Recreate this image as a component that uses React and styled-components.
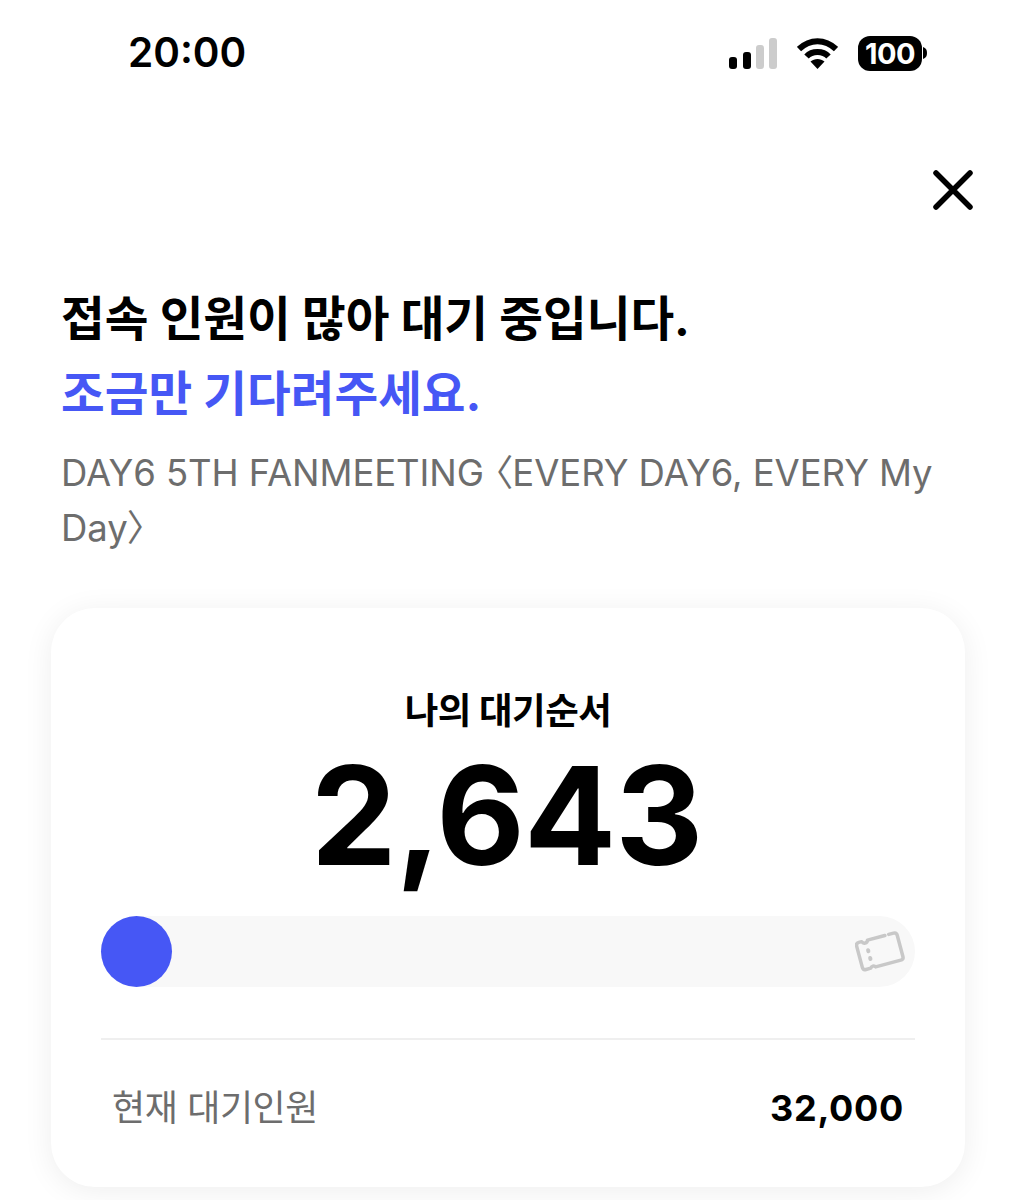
import React from "react";
import styled, { createGlobalStyle } from "styled-components";

const Global = createGlobalStyle`
  html, body { margin: 0; padding: 0; background: #fff; }
  body { width: 1016px; height: 1200px; overflow: hidden; font-family: "Inter", "Noto Sans CJK KR", sans-serif; }
`;
const KR = `"Inter", "Noto Sans CJK KR", sans-serif`;

const Page = styled.div`
  width: 1016px;
  height: 1200px;
  overflow: hidden;
  display: flex;
  flex-direction: column;
  color: #000;
`;
const StatusBar = styled.div`
  height: 106px;
  display: flex;
  justify-content: space-between;
  align-items: center;
  padding: 0 89px 0 128px;
  box-sizing: border-box;
`;
const Clock = styled.div`
  font: 600 40.5px/1 ${KR};
`;
const StatusIcons = styled.div`
  display: flex;
  align-items: center;
  gap: 20px;
`;
const Battery = styled.div`
  display: flex;
  align-items: center;
  gap: 1px;
`;
const BatteryBody = styled.div`
  width: 64px;
  height: 35px;
  border-radius: 12px;
  background: #000;
  color: #fff;
  font: 700 29px/35px "Inter", sans-serif;
  text-align: center;
  letter-spacing: -0.5px;
`;
const CloseRow = styled.div`
  display: flex;
  justify-content: flex-end;
  padding: 64px 43px 0 0;
  height: 46px;
`;
const Heading = styled.section`
  padding: 65px 60px 0 61px;
`;
const Title = styled.h1`
  margin: 0;
  font: 700 47.5px/75px ${KR};
  color: ${(p) => p.$color || "#000"};
  white-space: nowrap;
`;
const Subtitle = styled.p`
  margin: 15px 0 0;
  font: 400 36.5px/55px ${KR};
  letter-spacing: -0.07px;
  color: #6d6d6d;
`;
const Bracket = styled.span`
  font-feature-settings: "palt";
`;
const Card = styled.section`
  margin: 52px 51px 0;
  width: 914px;
  height: 579px;
  flex: none;
  box-sizing: border-box;
  background: #fff;
  border-radius: 44px;
  box-shadow: 0 4px 30px rgba(0, 0, 0, 0.07);
  padding: 78px 50px 0;
  display: flex;
  flex-direction: column;
`;
const QueueLabel = styled.div`
  font: 700 36.5px/50px ${KR};
  letter-spacing: -0.5px;
  text-align: center;
`;
const QueueNumber = styled.div`
  font: 700 136.5px/136px "Inter", sans-serif;
  text-align: center;
  letter-spacing: -1px;
  margin-top: 12px;
  padding-right: 3px;
`;
const Track = styled.div`
  margin-top: 32px;
  height: 71px;
  flex: none;
  border-radius: 36px;
  background: #f8f8f8;
  display: flex;
  align-items: center;
  justify-content: space-between;
  padding-right: 8px;
`;
const Dot = styled.div`
  width: 71px;
  height: 71px;
  border-radius: 50%;
  background: #4657f5;
`;
const Divider = styled.div`
  margin-top: 51px;
  height: 2px;
  flex: none;
  background: #efefef;
`;
const InfoRow = styled.div`
  display: flex;
  justify-content: space-between;
  align-items: center;
  padding: 0 11px;
  margin-top: 41px;
`;
const InfoLabel = styled.div`
  font: 400 36px/54px ${KR};
  color: #6d6d6d;
  letter-spacing: -0.4px;
`;
const InfoValue = styled.div`
  font: 700 36px/54px "Inter", sans-serif;
  letter-spacing: 0.7px;
`;

const Signal = () => (
  <svg width="48" height="31" viewBox="0 0 48 31">
    <rect x="0" y="19" width="8" height="12" rx="3" fill="#000" />
    <rect x="14" y="14" width="8" height="17" rx="3" fill="#000" />
    <rect x="27" y="7" width="8" height="24" rx="3" fill="#ccc" />
    <rect x="40" y="0" width="8" height="31" rx="3" fill="#ccc" />
  </svg>
);
const Wifi = () => (
  <svg width="41" height="31" viewBox="0 0 41 31" fill="none">
    <path d="M2 11C13 0.5 28 0.5 39 11" stroke="#000" strokeWidth="6" />
    <path d="M9.5 18.5C15 12.5 26 12.5 31.5 18.5" stroke="#000" strokeWidth="6" />
    <path d="M13.5 23.5C17.5 20 23.5 20 27.5 23.5L20.5 31Z" fill="#000" />
  </svg>
);
const Close = () => (
  <svg width="40" height="40" viewBox="0 0 40 40" fill="none">
    <path d="M3 3L37 37M37 3L3 37" stroke="#000" strokeWidth="5.5" strokeLinecap="round" />
  </svg>
);
const Ticket = () => (
  <svg width="52" height="44" viewBox="0 0 52 44" fill="none" stroke="#c8c8c8" strokeWidth="3.5" strokeLinecap="round" strokeLinejoin="round">
    <g transform="rotate(-15 26 22)">
      <path d="M38 7H43C45 7 46 8 46 10V32C46 34 45 35 43 35H17C16 33 13 33 12 35H7C5 35 4 34 4 32V10C4 8 5 7 7 7H10C11 10 15 10 16 7H34" />
      <path d="M14 17V18M14 25V26" strokeWidth="4" />
    </g>
  </svg>
);

export default function App() {
  return (
    <Page>
      <Global />
      <StatusBar>
        <Clock>20:00</Clock>
        <StatusIcons>
          <Signal />
          <Wifi />
          <Battery>
            <BatteryBody>100</BatteryBody>
            <svg width="4" height="12" viewBox="0 0 4 12"><path d="M0 0C3 1 4 3 4 6C4 9 3 11 0 12Z" fill="#000" /></svg>
          </Battery>
        </StatusIcons>
      </StatusBar>
      <CloseRow><Close /></CloseRow>
      <Heading>
        <Title>접속 인원이 많아 대기 중입니다.</Title>
        <Title $color="#4657f5">조금만 기다려주세요.</Title>
        <Subtitle>DAY6 5TH FANMEETING <Bracket>〈</Bracket>EVERY DAY6, EVERY My Day<Bracket>〉</Bracket></Subtitle>
      </Heading>
      <Card>
        <QueueLabel>나의 대기순서</QueueLabel>
        <QueueNumber>2,643</QueueNumber>
        <Track>
          <Dot />
          <Ticket />
        </Track>
        <Divider />
        <InfoRow>
          <InfoLabel>현재 대기인원</InfoLabel>
          <InfoValue>32,000</InfoValue>
        </InfoRow>
      </Card>
    </Page>
  );
}
